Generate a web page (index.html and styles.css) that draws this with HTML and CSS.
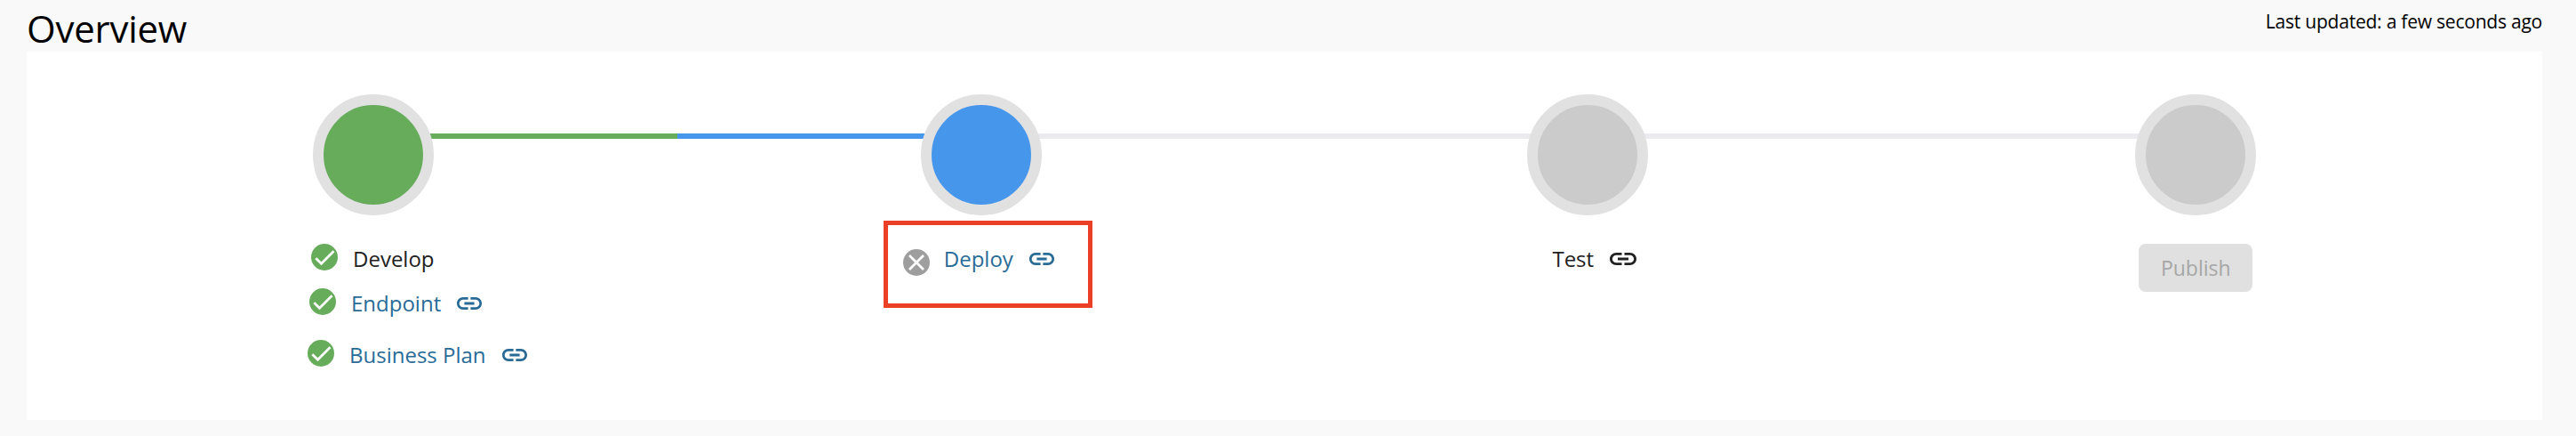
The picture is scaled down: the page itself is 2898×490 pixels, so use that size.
FILE: index.html
```html
<!DOCTYPE html>
<html lang="en">
<head>
<meta charset="utf-8">
<title>Overview</title>
<link rel="stylesheet" href="styles.css">
</head>
<body>
<svg class="defs" aria-hidden="true">
  <symbol id="check" viewBox="0 0 30 30"><circle cx="15" cy="15" r="15" fill="#66ac5b"/><path d="M5.300 16.300 L11.500 22.300 L25.500 8.200" fill="none" stroke="#fff" stroke-width="2.800"/></symbol>
  <symbol id="cross" viewBox="0 0 30 30"><circle cx="15" cy="15" r="15" fill="#9e9e9e"/><path d="M7 7 L23 23 M23 7 L7 23" fill="none" stroke="#fff" stroke-width="2.800"/></symbol>
  <symbol id="link" viewBox="2 7 20 10" preserveAspectRatio="none"><path d="M3.900 12c0-1.710 1.390-3.100 3.100-3.100h4V7H7c-2.760 0-5 2.240-5 5s2.240 5 5 5h4v-1.900H7c-1.710 0-3.100-1.390-3.100-3.100zM8 13h8v-2H8v2zm9-6h-4v1.900h4c1.710 0 3.100 1.390 3.100 3.100s-1.390 3.100-3.100 3.100h-4V17h4c2.760 0 5-2.240 5-5s-2.240-5-5-5z" fill="currentColor"/></symbol>
</svg>
<header class="header">
  <h1 class="title">Overview</h1>
  <p class="updated">Last updated: a few seconds ago</p>
</header>
<main class="panel">
  <section class="step">
    <div class="track"><span class="line line-none"></span><span class="line line-green"></span><span class="dot dot-green"></span></div>
    <div class="items">
      <div class="row row-develop"><svg class="status"><use href="#check"/></svg><span class="label">Develop</span></div>
      <div class="row row-endpoint"><svg class="status"><use href="#check"/></svg><a class="label">Endpoint</a><svg class="chain"><use href="#link"/></svg></div>
      <div class="row row-plan"><svg class="status"><use href="#check"/></svg><a class="label">Business Plan</a><svg class="chain"><use href="#link"/></svg></div>
    </div>
  </section>
  <section class="step">
    <div class="track"><span class="line line-blue"></span><span class="line line-grey"></span><span class="dot dot-blue"></span></div>
    <div class="highlight">
      <div class="row row-deploy"><svg class="status status-low"><use href="#cross"/></svg><a class="label">Deploy</a><svg class="chain"><use href="#link"/></svg></div>
    </div>
  </section>
  <section class="step">
    <div class="track"><span class="line line-grey"></span><span class="line line-grey"></span><span class="dot dot-test"></span></div>
    <div class="row row-test"><span class="label">Test</span><svg class="chain chain-wide"><use href="#link"/></svg></div>
  </section>
  <section class="step">
    <div class="track"><span class="line line-grey"></span><span class="line line-none"></span><span class="dot"></span></div>
    <button class="publish" disabled>Publish</button>
  </section>
</main>
</body>
</html>
```
FILE: styles.css
```css
* { box-sizing: border-box; }
body {
  margin: 0;
  height: 490px;
  background: #f9f9f9;
  color: #212121;
  font-family: "Open Sans", sans-serif;
  font-size: 24px;
  overflow: hidden;
}
.defs { display: none; }
.header {
  display: flex;
  justify-content: space-between;
  align-items: flex-start;
  height: 58px;
  padding: 0 38px 0 30px;
  color: #000;
}
.title { margin: 0; font-size: 42px; font-weight: 400; line-height: 64px; letter-spacing: -0.25px; }
.updated { margin: 9px 0 0; font-size: 21px; line-height: 30px; letter-spacing: -0.22px; }
.panel {
  display: grid;
  grid-template-columns: repeat(4, 1fr);
  height: 414px;
  margin: 0 38px 0 30px;
  padding: 48px 48px 0;
  background: #fff;
}
.step { display: flex; flex-direction: column; align-items: center; }
.track {
  position: relative;
  display: flex;
  flex-shrink: 0;
  align-items: flex-start;
  width: 100%;
  height: 136px;
  padding-top: 44px;
}
.line { flex: 1; height: 6px; }
.line-green { background: #66ac5b; }
.line-blue { background: #4696ec; }
.line-grey { background: #eaeaef; }
.dot {
  position: absolute;
  top: 0;
  left: calc(50% - 68px);
  width: 136px;
  height: 136px;
  border: 12px solid #e1e1e1;
  border-radius: 50%;
  background: #cbcbcb;
}
.dot-green { background: #66ac5b; }
.dot-blue { margin-left: 1px; background: #4696ec; }
.dot-test { margin-left: -1px; }
.items { align-self: flex-start; padding: 32px 0 0 268px; }
.row { display: flex; align-items: flex-start; height: 34px; }
.label { line-height: 34px; white-space: nowrap; }
a.label, a.label + .chain { color: #296b97; }
.status { width: 30px; height: 30px; margin-right: 17px; flex-shrink: 0; }
.status-low { margin: 6px 16px 0 0; }
.chain { width: 28px; height: 14px; margin: 10px 0 0 18px; flex-shrink: 0; }
.chain-wide { width: 30px; }
.row-develop { padding-left: 4px; }
.row-endpoint { margin-top: 16px; padding-left: 2px; }
.row-plan { margin-top: 24px; }
.highlight {
  width: 235px;
  height: 98px;
  margin: 6px 0 0 16px;
  padding: 21px 0 0 17px;
  border: 5px solid #eb4025;
}
.row-deploy { height: 40px; }
.row-test { margin: 32px 0 0 14px; }
.publish {
  width: 128px;
  height: 54px;
  margin-top: 32px;
  padding: 0;
  border: 0;
  border-radius: 8px;
  background: #e0e0e0;
  color: #a6a6a6;
  font: 23px "Open Sans", sans-serif;
}
```
